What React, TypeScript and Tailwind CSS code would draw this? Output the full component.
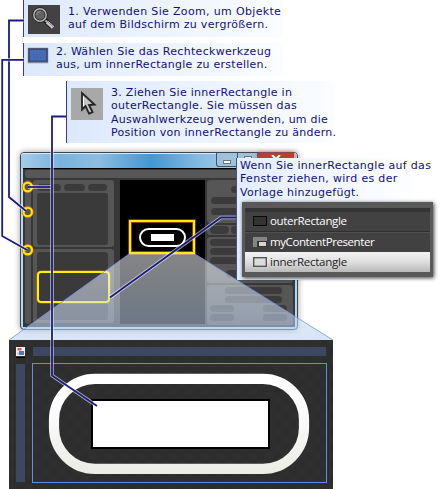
import type { ReactNode } from 'react';

type Line = { text: string; spacing: string };

/** Text of an annotation, one row for each line. */
function Lines({ lines }: { lines: Line[] }) {
  return (
    <div className="whitespace-nowrap text-[11px] leading-[13.3px] text-[#11117c]">
      {lines.map((l) => (
        <p key={l.text} className={l.spacing}>{l.text}</p>
      ))}
    </div>
  );
}

function Pill({ className }: { className: string }) {
  return <span className={`block shrink-0 rounded-full bg-[#3b3b3b] ${className}`} />;
}

function Group({ className, children }: { className: string; children: ReactNode }) {
  return <div className={`flex shrink-0 flex-col rounded-[3px] bg-[#565656] ${className}`}>{children}</div>;
}

function Magnifier() {
  return (
    <svg className="h-[29px] w-8 shrink-0 bg-[#424242]" viewBox="0 0 32 29">
      <path d="M17 15 L24 22" stroke="#1d1d1d" strokeWidth="5" />
      <path d="M16 14 L19 17" stroke="#aaa" strokeWidth="2" />
      <path d="M19 17 L25 22.5" stroke="#c9c9c9" strokeWidth="3.4" />
      <path d="M20 17 L25 21.5" stroke="#888" strokeWidth="1" />
      <circle cx="12" cy="10" r="6.2" fill="#626262" stroke="#1f1f1f" strokeWidth="3" />
      <circle cx="12" cy="10" r="6.2" fill="none" stroke="#b5b5b5" strokeWidth="1.5" />
      <path d="M8.5 10 Q9 6.5 12.5 6.5" fill="none" stroke="#999" />
    </svg>
  );
}

function RectangleTool() {
  return (
    <svg className="h-[17px] w-[22px] shrink-0" viewBox="0 0 22 17">
      <rect x="0.5" y="0.5" width="21" height="16" rx="1" fill="#aebbd2" />
      <rect x="1" y="1" width="20" height="14.5" fill="#53596a" />
      <rect x="2.5" y="2.5" width="17" height="11.5" fill="#456cb4" stroke="#344d82" />
      <path d="M6 7.5h9M7 10.5h9" stroke="#3559a0" strokeDasharray="1 2" />
    </svg>
  );
}

function SelectionTool() {
  return (
    <svg className="h-8 w-8 shrink-0 bg-[#a8a8a8]" viewBox="0 0 32 32">
      <path d="M12 5.5 L12 22 L15.5 18.5 L19 26 L22 24.5 L18.8 17.5 L24 17 Z" fill="#777" stroke="#777" strokeWidth="1.5" opacity=".7" />
      <path d="M11 5 L11 21.5 L14.5 18 L18 25.5 L21.5 24 L18 17 L23.5 16.5 Z" fill="#c6c6c6" stroke="#262626" strokeWidth="1.8" />
      <path d="M12.5 8.5V18" stroke="#fff" />
    </svg>
  );
}

function AppWindow() {
  return (
    <div className="ml-5 mt-[9px] flex h-[178px] w-[278px] shrink-0 flex-col rounded-[4px] border border-[#3c4652] bg-[#b4d8f4] px-0.5 pb-0.5 shadow-[0_0_6px_rgba(0,0,0,0.4)]">
      <div className="-mx-0.5 flex h-[15px] shrink-0 items-start justify-end rounded-t-[3px] border-t border-[#dceaf6] bg-[linear-gradient(90deg,#a5cce9,#79b3dd_14%,#8dbde1_28%,#4296d3_47%,#86bce3_65%,#a9cce8_80%,#b9d6ec)]">
        <span className="-mt-px flex h-[14px] w-[22px] items-end justify-center rounded-bl-[3px] border border-t-0 border-[#415366] bg-[#9fc1dc] pb-[2px]">
          <span className="h-1 w-2 border border-[#667786] bg-white" />
        </span>
        <span className="-mt-px flex h-[14px] w-5 items-start justify-center border-b border-r border-[#415366] bg-[#9fc1dc] pt-[3px]">
          <span className="h-[7px] w-2 border border-[#667786] bg-white" />
        </span>
        <span className="-mt-px mr-[3px] flex h-[14px] w-9 items-start justify-center bg-[#bb402c] pt-[2px] shadow-[0_0_4px_#e05050]">
          <svg className="h-2 w-2.5" viewBox="0 0 10 8"><path d="M1 0 L9 8 M9 0 L1 8" stroke="#fff" strokeWidth="2" /></svg>
        </span>
      </div>
      <div className="flex min-h-0 flex-1 flex-col border-t border-black bg-[#373737] px-0.5">
        <div className="mt-px h-2 shrink-0 rounded-[3px] bg-[#585858]" />
        <div className="mt-[2px] flex min-h-0 flex-1">
          <div className="mb-[3px] w-[6px] shrink-0 rounded-[3px] bg-[#555]" />
          <div className="ml-0.5 flex w-[81px] shrink-0 flex-col">
            <Group className="h-[67px] px-1 pt-1">
              <div className="flex gap-[3px]">
                <Pill className="h-[7px] w-6" />
                <Pill className="h-[7px] w-[21px]" />
                <Pill className="h-[7px] w-[19px]" />
              </div>
              <div className="mt-[2px] h-[52px] w-[71px] rounded-[3px] bg-[#3a3a3a]" />
            </Group>
            <Group className="mt-0.5 h-[74px] px-1 pt-[3px]">
              <div className="h-[68px] w-[71px] rounded-[3px] bg-[#3a3a3a]">
                <div className="mt-[19px] h-8 w-[73px] rounded-[4px] border-[2px] border-[#fff000] shadow-[0_0_0_0.5px_rgba(225,120,0,0.75)]" />
              </div>
            </Group>
          </div>
          <div className="ml-[6px] h-[144px] w-[85px] shrink-0 bg-black pl-[9px] pt-10">
            <div className="flex h-[34px] w-[66px] items-center justify-center border-[2px] border-[#ffed00] shadow-[0_0_0_0.5px_#d76a00,inset_0_0_0_1px_#8c3e00]">
              <div className="flex h-[19px] w-[47px] items-center justify-center rounded-full border-[2.5px] border-white">
                <span className="h-[7px] w-[23px] bg-white" />
              </div>
            </div>
          </div>
          <div className="ml-0.5 flex w-[86px] flex-col">
            <Group className="h-[43px] gap-1 pl-1 pt-[6px]">
              <Pill className="ml-5 h-[7px] w-[55px]" />
              <Pill className="h-[7px] w-[76px]" />
              <Pill className="h-[7px] w-[76px]" />
            </Group>
            <Group className="mt-[2px] h-[10px] pl-[3px] pt-px">
              <div className="flex gap-0.5">
                <Pill className="h-2 w-[19px]" />
                <Pill className="h-2 w-[58px]" />
              </div>
            </Group>
            <Group className="mt-[2px] h-[46px] gap-[2px] pl-[3px] pt-[2px]">
              <Pill className="h-[7px] w-[77px]" />
              <Pill className="h-[7px] w-[77px]" />
              <Pill className="h-[7px] w-[77px]" />
              <Pill className="ml-4 mt-1 h-2 w-[58px]" />
            </Group>
            <Group className="mt-[2px] h-10 gap-[2px] pl-[3px] pt-[2px]">
              <Pill className="ml-[15px] h-[7px] w-[57px]" />
              <Pill className="ml-[15px] h-[7px] w-[57px]" />
              <div className="flex gap-[29px]">
                <Pill className="h-[7px] w-6" />
                <Pill className="h-[7px] w-6" />
              </div>
              <div className="flex gap-[29px]">
                <Pill className="h-[7px] w-6" />
                <Pill className="h-[7px] w-6" />
              </div>
            </Group>
          </div>
        </div>
      </div>
    </div>
  );
}

/** Magnified artboard with the template shapes. */
function Artboard() {
  return (
    <div className="ml-[9px] mt-[10px] flex h-[149px] w-[324px] shrink-0 flex-col bg-[#2d2d2d] bg-[repeating-conic-gradient(#2d2d2d_0_25%,#2f2f2f_0_50%)] bg-[length:16px_16px] pl-[7px] pt-[7px]">
      <div className="flex h-[9px] gap-2">
        <svg className="h-[11px] w-[9px]" viewBox="0 0 9 11">
          <rect width="9" height="9" fill="#f2f2f2" />
          <rect x="1.5" y="1" width="4" height="2.5" fill="#d06060" />
          <rect x="3" y="4" width="5" height="4" fill="#5a76b4" />
          <rect x="1" y="5" width="2" height="3" fill="#d2d2d2" />
          <rect y="10" width="9" height="1" fill="#000" />
        </svg>
        <div className="h-[9px] w-[293px] bg-[#3d475f]" />
      </div>
      <div className="mt-[7px] flex gap-[7px]">
        <div className="mt-px h-[118px] w-[9px] bg-[#3d475f]" />
        <div className="h-[120px] w-[295px] border border-[#5c8fe6]">
          <svg className="h-[118px] w-[293px]" viewBox="33 364 293 118">
            <defs>
              <linearGradient id="ring" x1="0" y1="0" x2="0" y2="1">
                <stop offset="0" stopColor="#fff" />
                <stop offset=".35" stopColor="#fcfcfe" />
                <stop offset="1" stopColor="#ecede6" />
              </linearGradient>
            </defs>
            <rect x="54" y="378.8" width="250" height="90" rx="41" fill="none" stroke="url(#ring)" strokeWidth="10.2" />
            <rect x="91" y="399" width="179" height="50" fill="#000" />
            <rect x="93" y="401" width="175" height="46" fill="#fff" />
          </svg>
        </div>
      </div>
    </div>
  );
}

function LayerRow({ name, kind, className }: { name: string; kind: 'outer' | 'content' | 'inner'; className: string }) {
  return (
    <div className={`flex h-5 items-center pl-[8px] text-[11.5px] leading-[18px] ${className}`}>
      <svg className="mr-[3px] h-2.5 w-[14px]" viewBox="0 0 14 10">
        {kind === 'outer' && <rect x=".5" y=".5" width="13" height="9" fill="#333" stroke="#090909" />}
        {kind === 'content' && (
          <>
            <rect width="14" height="10" fill="#858585" />
            <rect x="4" y="4" width="10" height="6" fill="#343434" />
            <rect x="6" y="5" width="7" height="4" fill="#d9d5c7" />
          </>
        )}
        {kind === 'inner' && <rect x=".7" y=".7" width="12.6" height="8.6" fill="#dcdcdc" stroke="#555" strokeWidth="1.4" />}
      </svg>
      <span>{name}</span>
    </div>
  );
}

function TemplateNote() {
  return (
    <div className="absolute left-[236px] top-[158px] h-[122px] w-[205px] border-l border-[#4a4a9e] bg-[linear-gradient(90deg,#e2edfe,#f2f7ff_45%,#fff_90%)] pl-[3px] pt-[1px]">
      <Lines
        lines={[
          { text: 'Wenn Sie innerRectangle auf das', spacing: 'tracking-[0.3px]' },
          { text: 'Fenster ziehen, wird es der', spacing: 'tracking-[0.33px]' },
          { text: 'Vorlage hinzugefügt.', spacing: 'tracking-[0.26px]' },
        ]}
      />
      <div className="ml-[2px] mt-[3px] h-[75px] w-[191px] bg-[#595959] px-[3px] pt-[6px] font-['Open_Sans','Noto_Sans',sans-serif] text-white shadow-[1px_1px_4px_rgba(0,0,0,0.75)]">
        <div className="h-1 bg-[#343434]" />
        <LayerRow name="outerRectangle" kind="outer" className="border-b border-[#303030] bg-[#424242] font-medium tracking-[-0.34px]" />
        <LayerRow name="myContentPresenter" kind="content" className="border-t border-[#515151] bg-[#414141] font-medium tracking-[-0.41px]" />
        <LayerRow name="innerRectangle" kind="inner" className="bg-[linear-gradient(#f4f4f4,#dedede_50%,#b9b9b9)] tracking-[-0.25px] text-[#222]" />
      </div>
    </div>
  );
}

const leaders = [
  'M24 20.5 H9 V197 L26 211',
  'M24 59.8 H2.2 V236 L27 250',
  'M28 187 H52',
  'M66 116.5 H52 V375.5 L97 406',
  'M237 217.5 H221 L110 297.5',
];

/** Projection beam, target rings and leader lines that run across the drawing. */
function Annotations() {
  return (
    <svg className="pointer-events-none absolute left-0 top-0 h-[489px] w-[441px]" viewBox="0 0 441 489" fill="none">
      <defs>
        <linearGradient id="beam" x1="0" y1="0" x2="0" y2="1">
          <stop offset="0" stopColor="#fff" stopOpacity=".52" />
          <stop offset="1" stopColor="#b6cff2" stopOpacity=".56" />
        </linearGradient>
      </defs>
      <path d="M129 254 H195 L333 340 H9 Z" fill="url(#beam)" />
      <path d="M129 254 L9 340 M195 254 L333 340" stroke="#7195e3" strokeWidth=".8" />
      {[187, 212, 250].map((y) => (
        <g key={y}>
          <circle cx="27.7" cy={y} r="4.4" stroke="#e96a00" strokeWidth="3" />
          <circle cx="27.7" cy={y} r="4.2" stroke="#ffee00" strokeWidth="2" />
        </g>
      ))}
      {leaders.map((d) => (
        <g key={d}>
          <path d={d} stroke="#fff" strokeOpacity=".6" strokeWidth="3.6" />
          <path d={d} stroke="#1c1c80" strokeWidth="1.8" />
        </g>
      ))}
    </svg>
  );
}

export default function App() {
  return (
    <main className="relative flex h-[489px] w-[441px] flex-col overflow-hidden bg-white font-[Verdana,'DejaVu_Sans',sans-serif]">
      <section className="ml-[23px] flex h-[37px] w-[260px] shrink-0 items-start gap-2 border-l border-[#3b3b92] bg-[linear-gradient(90deg,#dce9fc,#e9f1ff_40%,#fbfdff)] pl-1 pt-[5px]">
        <Magnifier />
        <Lines
          lines={[
            { text: '1. Verwenden Sie Zoom, um Objekte', spacing: 'tracking-[0.34px]' },
            { text: 'auf dem Bildschirm zu vergrößern.', spacing: 'tracking-[0.3px]' },
          ]}
        />
      </section>
      <section className="ml-[23px] mt-[6px] flex h-[33px] w-[260px] shrink-0 items-start gap-[7px] border-l border-[#3b3b92] bg-[linear-gradient(90deg,#dce9fc,#e9f1ff_40%,#fbfdff)] pl-[3px] pt-[2px]">
        <div className="pt-[2px]"><RectangleTool /></div>
        <Lines
          lines={[
            { text: '2. Wählen Sie das Rechteckwerkzeug', spacing: 'tracking-[0.3px]' },
            { text: 'aus, um innerRectangle zu erstellen.', spacing: 'tracking-[0.27px]' },
          ]}
        />
      </section>
      <section className="ml-[66px] mt-[5px] flex h-[62px] w-[269px] shrink-0 items-start gap-2 border-l border-[#3b3b92] bg-[linear-gradient(90deg,#dce9fc,#e9f1ff_40%,#fbfdff)] pl-1 pt-[5px]">
        <div className="pt-[2px]"><SelectionTool /></div>
        <Lines
          lines={[
            { text: '3. Ziehen Sie innerRectangle in', spacing: 'tracking-[0.28px]' },
            { text: 'outerRectangle. Sie müssen das', spacing: 'tracking-[0.29px]' },
            { text: 'Auswahlwerkzeug verwenden, um die', spacing: 'tracking-[0.25px]' },
            { text: 'Position von innerRectangle zu ändern.', spacing: 'tracking-[0.27px]' },
          ]}
        />
      </section>
      <AppWindow />
      <Artboard />
      <Annotations />
      <TemplateNote />
    </main>
  );
}
